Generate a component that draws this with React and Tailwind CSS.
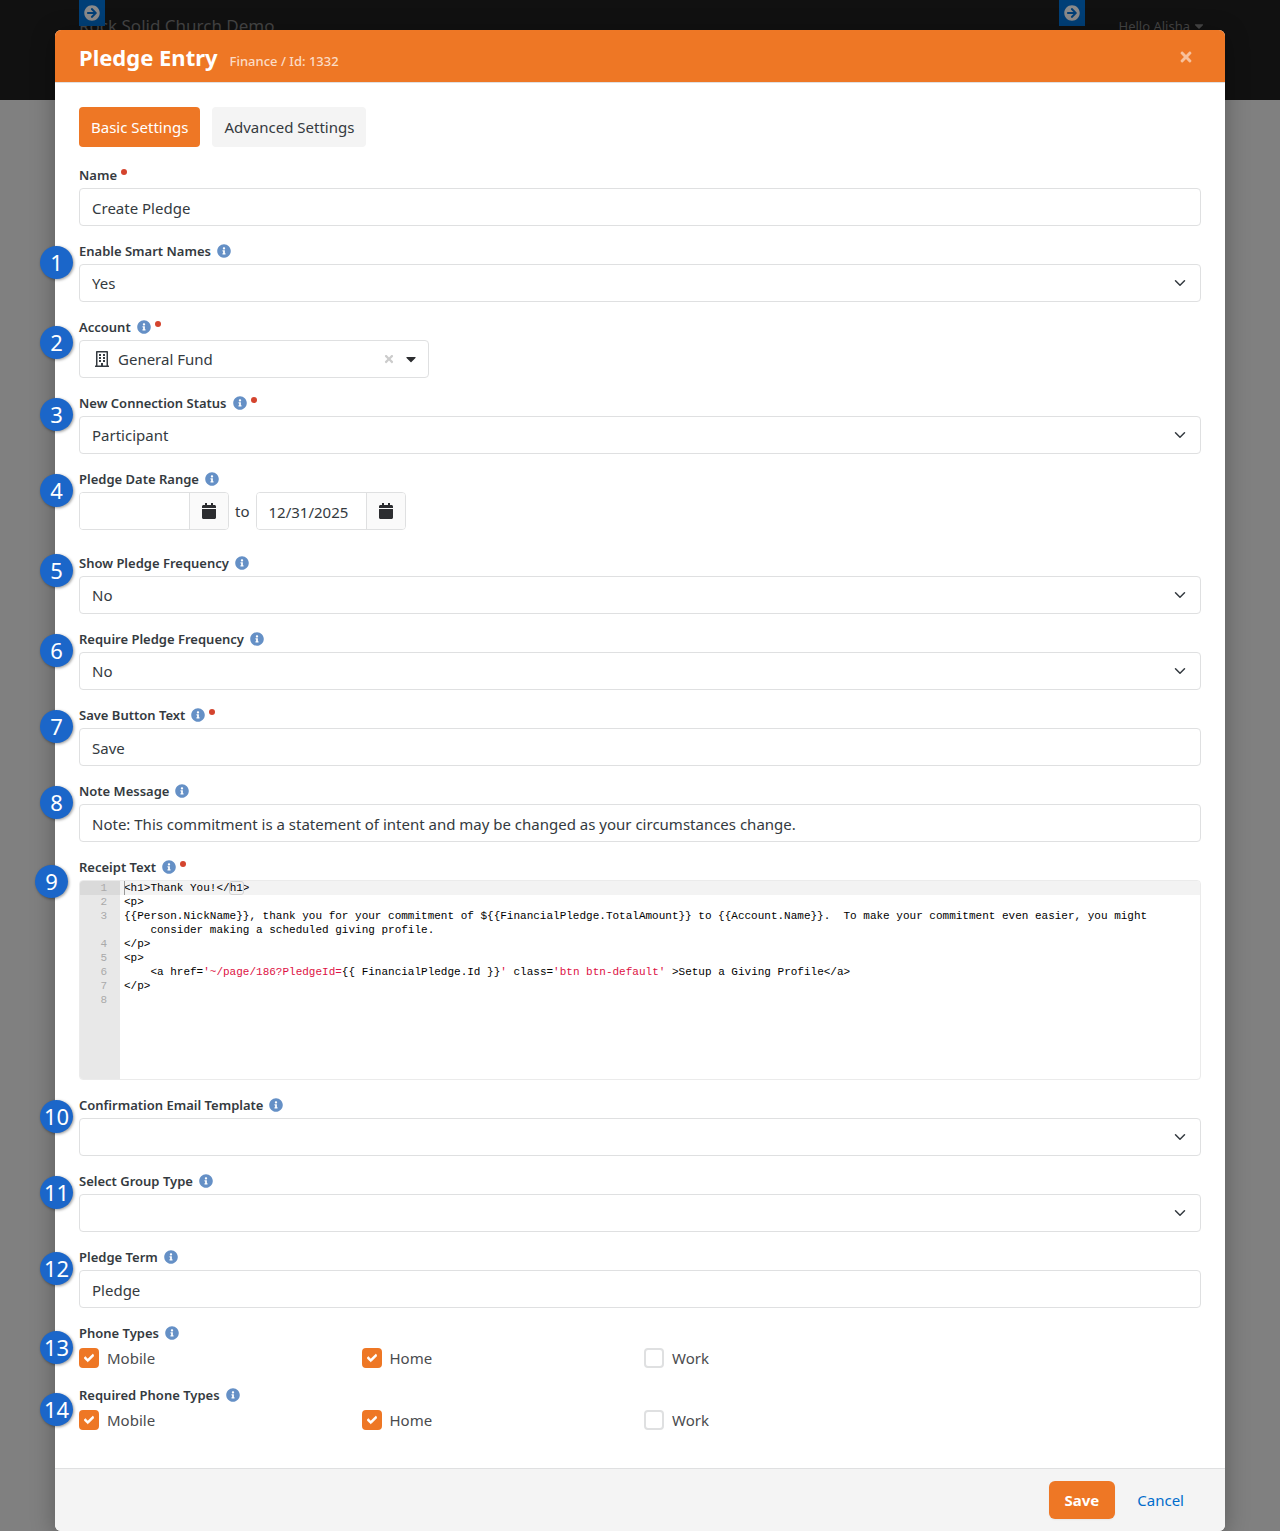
import React, { useState } from 'react'
import {
  FaArrowCircleRight,
  FaCalendar,
  FaCaretDown,
  FaCheck,
  FaInfoCircle,
  FaRegBuilding,
  FaTimes
} from 'react-icons/fa'

const controlClass =
  'block h-[38px] w-full rounded border border-[#dfe0e1] bg-white px-3 text-[15px] text-[#343a40] outline-none focus:border-[#ee7725]'
const inputClass = `${controlClass} pt-0.5`

const receiptLines = [
  { number: 1, active: true, code: <>&lt;h1&gt;Thank You!&lt;/<span className="rounded-xs outline outline-[#d2d2d2]">h1</span>&gt;</> },
  { number: 2, code: '<p>' },
  {
    number: 3,
    code: '{{Person.NickName}}, thank you for your commitment of ${{FinancialPledge.TotalAmount}} to {{Account.Name}}.  To make your commitment even easier, you might'
  },
  { number: '', code: '    consider making a scheduled giving profile.' },
  { number: 4, code: '</p>' },
  { number: 5, code: '<p>' },
  {
    number: 6,
    code: (
      <>
        {'    <a href='}
        <span className="text-[#dd1144]">{"'~/page/186?PledgeId="}</span>
        {'{{ FinancialPledge.Id }}'}
        <span className="text-[#dd1144]">{"'"}</span>
        {' class='}
        <span className="text-[#dd1144]">{"'btn btn-default'"}</span>
        {' >Setup a Giving Profile</a>'}
      </>
    )
  },
  { number: 7, code: '</p>' },
  { number: 8, code: '' }
]

function Badge({ number, className = '-left-[39px] top-2' }) {
  return (
    <span
      className={`absolute z-10 flex h-[33px] w-[33px] items-center justify-center rounded-full bg-[#1b66c9] pb-0.5 text-[22px] leading-none text-white shadow-[1px_1px_3px_rgba(0,0,0,0.4)] ${className}`}
    >
      {number}
    </span>
  )
}

function LabelContent({ text, help, required }) {
  return (
    <>
      <span className="pt-0.5">{text}</span>
      {help && <FaInfoCircle className="ml-1.5 h-3.5 w-3.5 text-[#6590c6]" />}
      {required && <span className="mb-1.5 ml-1 h-1.5 w-1.5 rounded-full bg-[#d4442e]" />}
    </>
  )
}

function Field({ id, label, help = true, required, badge, badgeClass, className = 'mb-3', children }) {
  return (
    <div className={`relative ${className}`}>
      {badge && <Badge number={badge} className={badgeClass} />}
      <label
        id={`${id}-label`}
        htmlFor={id}
        className="flex h-[26px] items-center text-[13px] font-semibold text-[#343a40]"
      >
        <LabelContent text={label} help={help} required={required} />
      </label>
      {children}
    </div>
  )
}

function Select({ id, options, value }) {
  return (
    <div className="relative">
      <select id={id} defaultValue={value} className={`${controlClass} appearance-none`}>
        {options.map((option) => (
          <option key={option} value={option}>{option}</option>
        ))}
      </select>
      <svg viewBox="0 0 16 16" className="pointer-events-none absolute top-[13px] right-[15px] h-3 w-3" fill="none">
        <path d="M2 5l6 6 6-6" stroke="#343a40" strokeWidth="2" strokeLinecap="round" strokeLinejoin="round" />
      </svg>
    </div>
  )
}

function DateInput({ id, label, value }) {
  return (
    <div className="flex h-[38px] w-[150px] overflow-hidden rounded border border-[#dfe0e1]">
      <input
        id={id}
        type="text"
        aria-label={label}
        defaultValue={value}
        className="w-[109px] min-w-0 bg-white px-3 pt-0.5 text-[15px] text-[#343a40] outline-none"
      />
      <button
        type="button"
        aria-label="Open calendar"
        className="flex flex-1 items-center justify-center border-l border-[#dfe0e1] bg-[#fafafa] text-[#2c2d30]"
      >
        <FaCalendar className="h-4 w-4" />
      </button>
    </div>
  )
}

function CheckboxGroup({ id, label, badge }) {
  const [selected, setSelected] = useState(['Mobile', 'Home'])

  const toggle = (type) => {
    setSelected(selected.includes(type) ? selected.filter((t) => t !== type) : [...selected, type])
  }

  return (
    <div className="relative mb-3">
      <Badge number={badge} className="-left-[39px] top-[11px]" />
      <fieldset>
        <legend className="flex h-[26px] items-center text-[13px] font-semibold text-[#343a40]">
          <LabelContent text={label} help />
        </legend>
        <div className="grid grid-cols-4 gap-2">
          {['Mobile', 'Home', 'Work'].map((type) => (
            <label key={type} htmlFor={`${id}-${type}`} className="flex h-6 items-center gap-2 text-[15px] text-[#4a4b4e]">
              <span className="relative flex h-5 w-5 items-center justify-center">
                <input
                  id={`${id}-${type}`}
                  type="checkbox"
                  checked={selected.includes(type)}
                  onChange={() => toggle(type)}
                  className="h-5 w-5 appearance-none rounded border-2 border-[#dfe0e1] bg-white checked:border-[#ee7725] checked:bg-[#ee7725]"
                />
                {selected.includes(type) && (
                  <FaCheck
                    className="pointer-events-none absolute h-2.5 w-2.5 text-white"
                    stroke="currentColor"
                    strokeWidth="40"
                  />
                )}
              </span>
              {type}
            </label>
          ))}
        </div>
      </fieldset>
    </div>
  )
}

function CodeEditor({ labelledBy }) {
  return (
    <div
      role="textbox"
      aria-multiline="true"
      aria-labelledby={labelledBy}
      className="flex h-[200px] flex-col overflow-hidden rounded border border-[#ebebeb] font-['Liberation_Mono',monospace] text-[11px] leading-[14px] text-black"
    >
      {receiptLines.map((line, index) => (
        <div key={index} className="flex">
          <span className={`h-3.5 w-10 shrink-0 pr-[13px] text-right text-[#aaaaaa] ${line.active ? 'bg-[#dadada]' : 'bg-[#e8e8e8]'}`}>
            {line.number}
          </span>
          <span className={`flex-1 pl-1 whitespace-pre ${line.active ? 'bg-[#f3f3f3]' : 'bg-white'}`}>
            {line.active && <span className="absolute h-3.5 w-px bg-[#999999]" />}
            {line.code}
          </span>
        </div>
      ))}
      <div className="w-10 flex-1 bg-[#e8e8e8]" />
    </div>
  )
}

function ZoneFlyout({ label }) {
  return (
    <button
      type="button"
      aria-label={label}
      className="flex h-[26px] w-[26px] items-center justify-center bg-[#003f77] text-[#8a8a8a]"
    >
      <FaArrowCircleRight className="h-4 w-4" />
    </button>
  )
}

function PageHeader() {
  return (
    <header className="h-[100px] bg-[#111111] pr-[76px] pl-[79px] text-[#454545]">
      <div className="relative flex justify-between">
        <span className="pt-3 text-[17px] leading-7">Rock Solid Church Demo</span>
        <span className="flex items-center pt-3 text-[13px] leading-[26px]">
          Hello Alisha
          <FaCaretDown className="ml-1 h-3.5 w-2.5" />
        </span>
        <div className="absolute top-0 left-0">
          <ZoneFlyout label="Header zone" />
        </div>
        <div className="absolute top-0 right-[119px]">
          <ZoneFlyout label="Login zone" />
        </div>
      </div>
    </header>
  )
}

export default function App() {
  return (
    <div className="min-h-screen bg-[#808080] font-['Noto_Sans','Open_Sans',sans-serif] text-[#343a40]">
      <PageHeader />
      <main
        role="dialog"
        aria-labelledby="modal-title"
        className="relative mx-auto -mt-[70px] w-[calc(100%-110px)] max-w-[1170px] rounded-md bg-white shadow-[0_4px_24px_rgba(0,0,0,0.3)]"
      >
        <div className="flex h-[53px] items-center justify-between rounded-t-md border-b border-[#dfe0e1] bg-[#ee7725] px-6 pt-0.5">
          <div className="flex items-baseline gap-3">
            <h1 id="modal-title" className="text-[22px] leading-8 font-bold text-white">Pledge Entry</h1>
            <small className="text-[13px] font-medium text-[#fbdcc6]">Finance / Id: 1332</small>
          </div>
          <button type="button" aria-label="Close" className="flex w-[30px] justify-center text-[#f8c19b]">
            <FaTimes className="h-4 w-4" />
          </button>
        </div>

        <form className="px-6 pt-6" onSubmit={(e) => e.preventDefault()}>
          <div className="mb-[15px] flex gap-3 text-[15px]">
            <button type="button" className="h-10 rounded bg-[#ee7725] px-3 text-white">
              Basic Settings
            </button>
            <button type="button" className="h-10 rounded bg-[#f4f4f4] px-3 text-[#343a40]">
              Advanced Settings
            </button>
          </div>

          <Field id="name" label="Name" help={false} required>
            <input id="name" type="text" defaultValue="Create Pledge" className={inputClass} />
          </Field>
          <Field id="smart-names" label="Enable Smart Names" badge="1">
            <Select id="smart-names" options={['Yes', 'No']} value="Yes" />
          </Field>
          <Field id="account" label="Account" required badge="2" badgeClass="-left-[39px] top-3">
            <div className="flex h-[38px] w-[350px] items-center rounded border border-[#dfe0e1] pr-[11px] pl-3.5">
              <button id="account" type="button" className="flex flex-1 items-center gap-2 text-[15px]">
                <FaRegBuilding className="h-4 w-4" />
                General Fund
              </button>
              <button type="button" aria-label="Clear account" className="mr-2.5 text-[#cccccc]">
                <FaTimes className="h-3 w-3" />
              </button>
              <FaCaretDown className="h-4 w-3 text-[#2c2d30]" />
            </div>
          </Field>
          <Field id="connection-status" label="New Connection Status" required badge="3">
            <Select id="connection-status" options={['Participant', 'Visitor', 'Member']} value="Participant" />
          </Field>
          <Field id="date-start" label="Pledge Date Range" badge="4" className="mb-5">
            <div className="flex items-center gap-1.5 text-[15px]">
              <DateInput id="date-start" label="Start date" value="" />
              to
              <DateInput id="date-end" label="End date" value="12/31/2025" />
            </div>
          </Field>
          <Field id="show-frequency" label="Show Pledge Frequency" badge="5" badgeClass="-left-[39px] top-1">
            <Select id="show-frequency" options={['Yes', 'No']} value="No" />
          </Field>
          <Field id="require-frequency" label="Require Pledge Frequency" badge="6">
            <Select id="require-frequency" options={['Yes', 'No']} value="No" />
          </Field>
          <Field id="save-text" label="Save Button Text" required badge="7">
            <input id="save-text" type="text" defaultValue="Save" className={inputClass} />
          </Field>
          <Field id="note" label="Note Message" badge="8">
            <input
              id="note"
              type="text"
              defaultValue="Note: This commitment is a statement of intent and may be changed as your circumstances change."
              className={inputClass}
            />
          </Field>
          <Field id="receipt" label="Receipt Text" required badge="9" badgeClass="-left-11 top-[11px]">
            <CodeEditor labelledBy="receipt-label" />
          </Field>
          <Field id="email-template" label="Confirmation Email Template" badge="10">
            <Select id="email-template" options={['']} value="" />
          </Field>
          <Field id="group-type" label="Select Group Type" badge="11">
            <Select id="group-type" options={['']} value="" />
          </Field>
          <Field id="pledge-term" label="Pledge Term" badge="12">
            <input id="pledge-term" type="text" defaultValue="Pledge" className={inputClass} />
          </Field>
          <CheckboxGroup id="phone" label="Phone Types" badge="13" />
          <CheckboxGroup id="required-phone" label="Required Phone Types" badge="14" />
        </form>

        <div className="mt-9 flex justify-end gap-1.5 rounded-b-md border-t border-[#dfe0e1] bg-[#f4f4f4] px-[25px] py-3 text-[15px]">
          <button type="button" className="h-[38px] rounded-md bg-[#ee7725] px-4 font-bold text-white shadow-xs">
            Save
          </button>
          <a href="#cancel" className="flex h-[38px] items-center px-4 text-[#006dcc]">Cancel</a>
        </div>
      </main>
    </div>
  )
}
